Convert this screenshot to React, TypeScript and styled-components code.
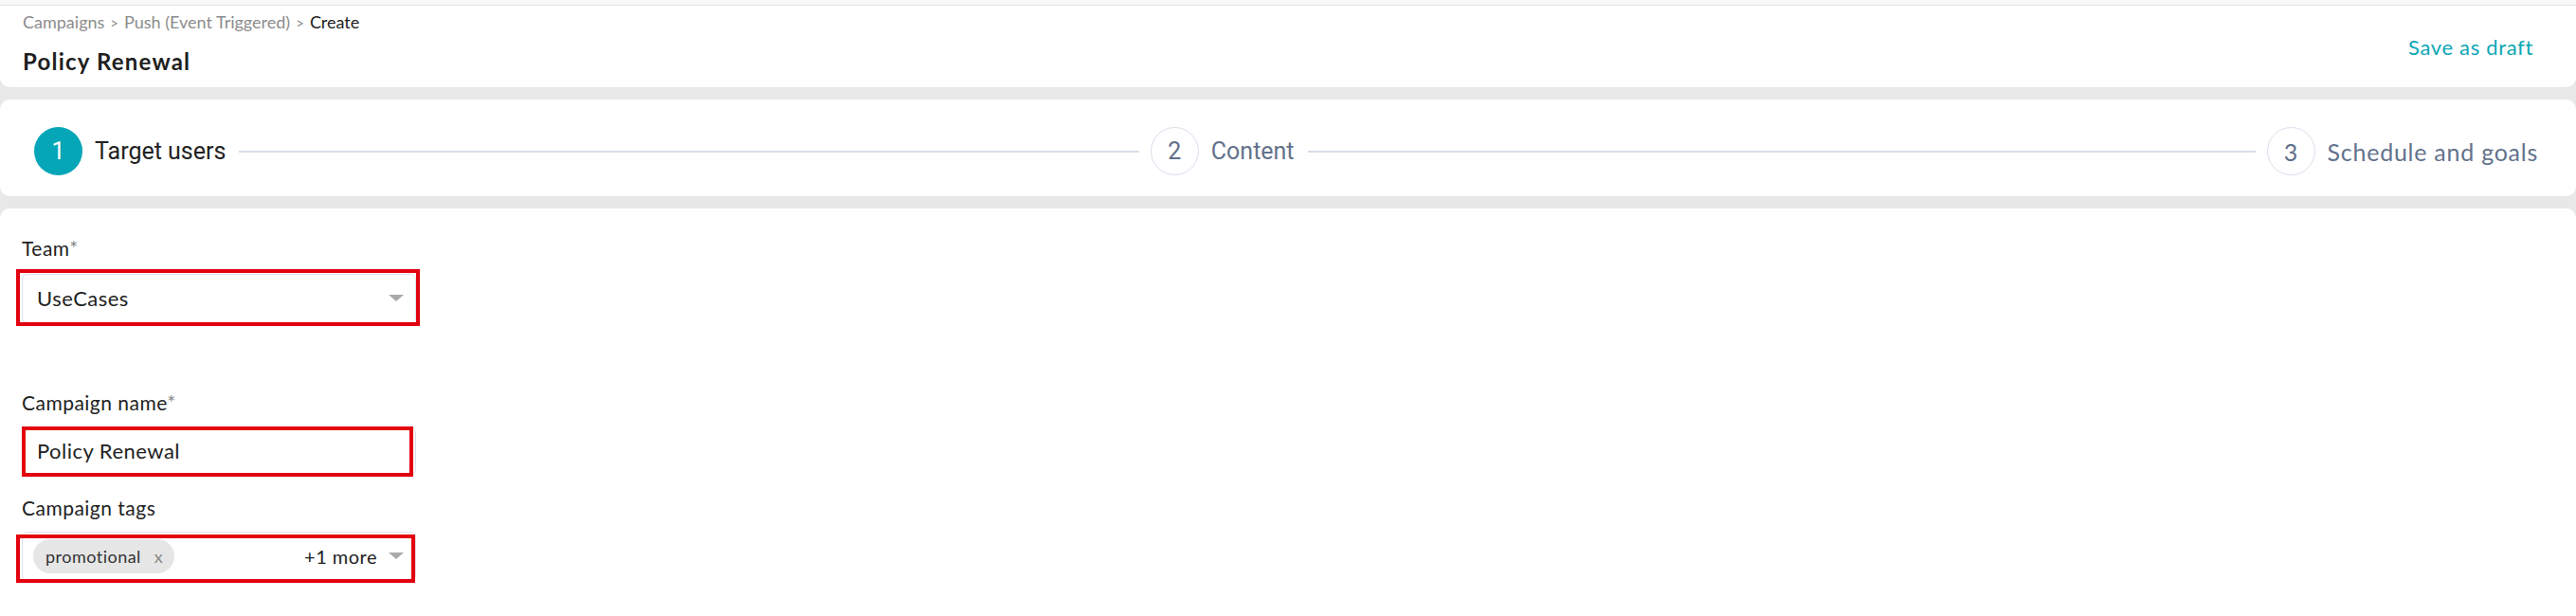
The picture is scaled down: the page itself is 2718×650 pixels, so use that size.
import { Fragment } from 'react';
import styled, { createGlobalStyle } from 'styled-components';

const GlobalStyle = createGlobalStyle`
  html, body {
    margin: 0;
    padding: 0;
  }
  body {
    background: #e8e8e8;
    font-family: Lato, 'Open Sans', sans-serif;
    letter-spacing: 0.03em;
    color: #222;
  }
`;

const Page = styled.div`
  display: flex;
  flex-direction: column;
  min-height: 650px;
`;

const TopStrip = styled.div`
  height: 5px;
  background: #f8f8f8;
  border-bottom: 1px solid #e6e6e6;
`;

const Header = styled.header`
  display: flex;
  justify-content: space-between;
  align-items: center;
  background: #fff;
  border-radius: 0 0 10px 10px;
  padding: 7px 45px 13px 24px;
`;

const Breadcrumb = styled.nav`
  font-size: 18px;
  line-height: 1.2;
  letter-spacing: 0;
  color: #8c8c8c;
  span.sep {
    font-size: 15px;
    margin: 0 6px;
  }
  span.current {
    color: #1c1c1c;
  }
`;

const Title = styled.h1`
  margin: 16px 0 0;
  font-size: 24px;
  line-height: 1.2;
  font-weight: 700;
  letter-spacing: 0.05em;
  color: #1f1f1f;
`;

const DraftButton = styled.button`
  border: 0;
  outline: 0;
  background: none;
  padding: 0;
  margin-top: 6px;
  cursor: pointer;
  font-family: inherit;
  letter-spacing: 0.03em;
  font-size: 22px;
  color: #0ca6b5;
`;

const Stepper = styled.section`
  display: flex;
  align-items: center;
  background: #fff;
  border-radius: 10px;
  margin-top: 13px;
  padding: 29px 40px 22px 36px;
`;

const Step = styled.div<{ $grow?: boolean }>`
  display: flex;
  align-items: center;
  flex: ${(p) => (p.$grow ? '1 1 0' : '0 0 auto')};
`;

const StepCircle = styled.div<{ $active?: boolean; $alt?: boolean }>`
  width: 51px;
  height: 51px;
  flex: none;
  box-sizing: border-box;
  border-radius: 50%;
  display: flex;
  align-items: center;
  justify-content: center;
  font-family: ${(p) => (p.$alt ? 'Lato' : 'Roboto')}, sans-serif;
  letter-spacing: 0;
  font-size: 25px;
  background: ${(p) => (p.$active ? '#05a6b7' : '#fff')};
  color: ${(p) => (p.$active ? '#fff' : '#5f7089')};
  border: ${(p) => (p.$active ? '0' : '1px solid #d9dfeb')};
`;

const StepLabel = styled.span<{ $active?: boolean; $alt?: boolean }>`
  margin-left: 13px;
  font-family: ${(p) => (p.$alt ? 'Lato' : 'Roboto')}, sans-serif;
  letter-spacing: ${(p) => (p.$alt ? '0.03em' : '0')};
  font-size: 25px;
  white-space: nowrap;
  color: ${(p) => (p.$active ? '#222' : '#63728c')};
`;

const Connector = styled.div`
  flex: 1;
  height: 2px;
  background: #d8dde9;
  margin: 0 12px 0 14px;
`;

const FormCard = styled.main`
  flex: 1;
  background: #fff;
  border-radius: 10px 10px 0 0;
  margin-top: 13px;
  padding: 29px 0 40px 23px;
`;

const Field = styled.div<{ $gap: number }>`
  display: flex;
  flex-direction: column;
  width: 416px;
  margin-top: ${(p) => p.$gap}px;
`;

const Label = styled.label<{ $space: number }>`
  font-size: 21px;
  line-height: 1.2;
  color: #222;
  margin-bottom: ${(p) => p.$space}px;
  span {
    color: #8a8a8a;
  }
`;

const InputBox = styled.div<{ $height: number; $padLeft?: number }>`
  position: relative;
  display: flex;
  align-items: center;
  box-sizing: border-box;
  height: ${(p) => p.$height}px;
  border: 1px solid #dde2ea;
  border-radius: 6px;
  padding: 0 12px 0 ${(p) => p.$padLeft ?? 15}px;
  font-size: 22px;
  color: #222;
`;

const Value = styled.span`
  flex: 1;
`;

const Caret = styled.span`
  width: 0;
  height: 0;
  border-left: 8px solid transparent;
  border-right: 8px solid transparent;
  border-top: 7px solid #a9a9a9;
`;

const Chip = styled.span`
  display: inline-flex;
  align-items: center;
  gap: 14px;
  height: 36px;
  padding: 0 12px 0 13px;
  border-radius: 18px;
  background: #e6e6e6;
  font-size: 18px;
  color: #333;
  b {
    font-weight: 400;
    color: #8a8a8a;
  }
`;

const More = styled.span`
  margin-left: auto;
  margin-right: 12px;
  font-size: 20px;
  color: #222;
`;

const Highlight = styled.div<{ $t: number; $r: number; $b: number; $l: number }>`
  position: absolute;
  top: ${(p) => p.$t}px;
  right: ${(p) => p.$r}px;
  bottom: ${(p) => p.$b}px;
  left: ${(p) => p.$l}px;
  border: 4px solid #e3000f;
  pointer-events: none;
`;

const steps = [
  { n: 1, label: 'Target users', active: true },
  { n: 2, label: 'Content' },
  { n: 3, label: 'Schedule and goals', alt: true },
];

const App = () => {
  return (
    <>
      <GlobalStyle />
      <Page>
        <TopStrip />
        <Header>
          <div>
            <Breadcrumb>
              Campaigns<span className='sep'>&gt;</span>Push (Event Triggered)
              <span className='sep'>&gt;</span>
              <span className='current'>Create</span>
            </Breadcrumb>
            <Title>Policy Renewal</Title>
          </div>
          <DraftButton>Save as draft</DraftButton>
        </Header>

        <Stepper>
          {steps.map((s, i) => {
            const last = i === steps.length - 1;
            return (
              <Fragment key={s.n}>
                <Step $grow={!last}>
                  <StepCircle $active={s.active} $alt={s.alt}>
                    {s.n}
                  </StepCircle>
                  <StepLabel $active={s.active} $alt={s.alt}>
                    {s.label}
                  </StepLabel>
                  {!last && <Connector />}
                </Step>
              </Fragment>
            );
          })}
        </Stepper>

        <FormCard>
          <Field $gap={0}>
            <Label $space={14}>
              Team<span>*</span>
            </Label>
            <InputBox $height={52}>
              <Value>UseCases</Value>
              <Caret />
              <Highlight $t={-6} $r={-5} $b={-4} $l={-7} />
            </InputBox>
          </Field>

          <Field $gap={71}>
            <Label $space={14}>
              Campaign name<span>*</span>
            </Label>
            <InputBox $height={50}>
              <Value>Policy Renewal</Value>
              <Highlight $t={-2} $r={2} $b={-3} $l={-1} />
            </InputBox>
          </Field>

          <Field $gap={22}>
            <Label $space={13}>Campaign tags</Label>
            <InputBox $height={52} $padLeft={11}>
              <Chip>
                promotional<b>x</b>
              </Chip>
              <More>+1 more</More>
              <Caret />
              <Highlight $t={2} $r={0} $b={-3} $l={-7} />
            </InputBox>
          </Field>
        </FormCard>
      </Page>
    </>
  );
};

export default App;
